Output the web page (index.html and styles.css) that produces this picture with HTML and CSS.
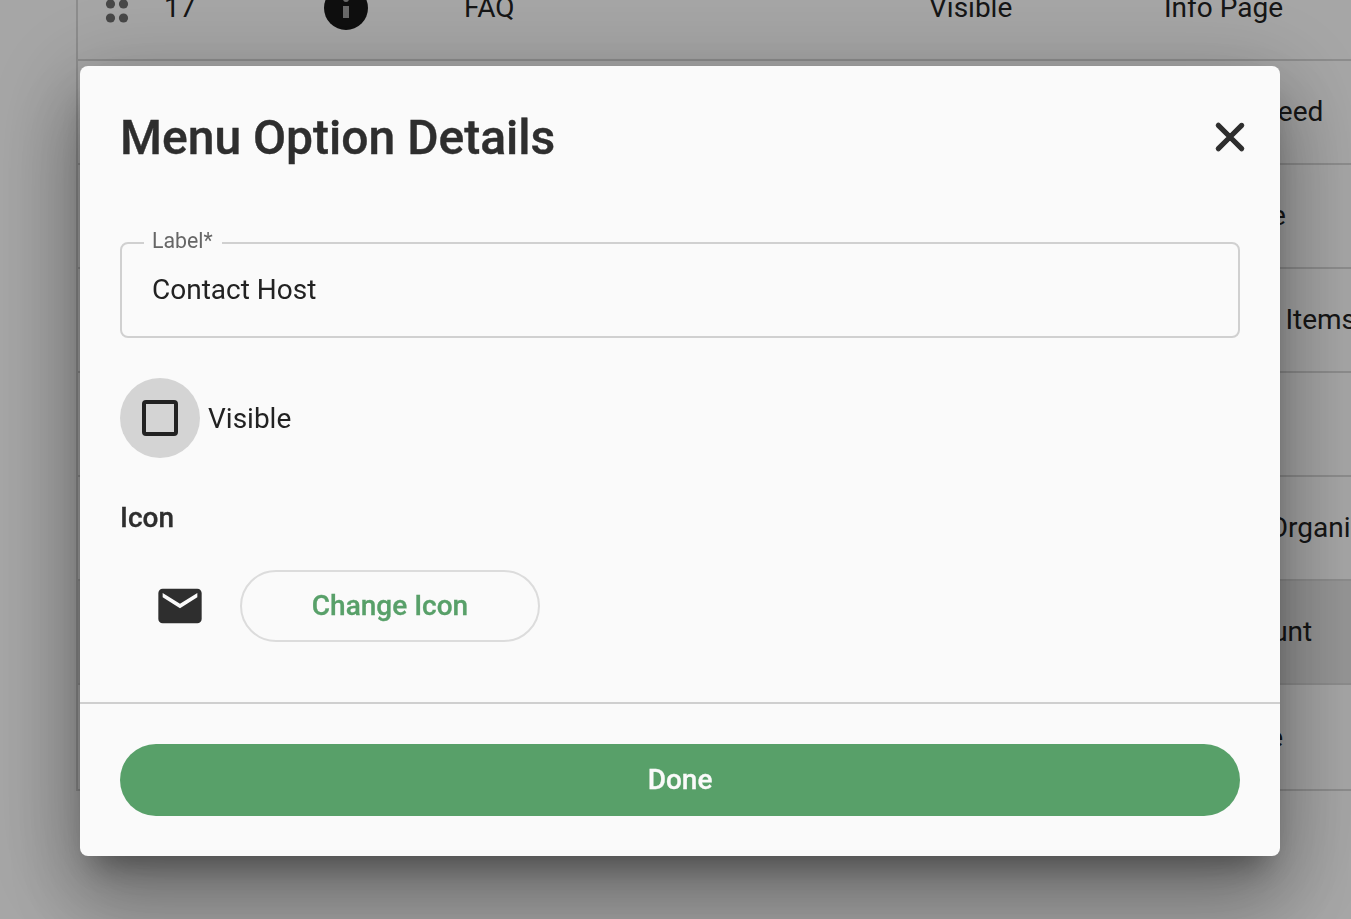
FILE: index.html
```html
<!DOCTYPE html>
<html>
<head>
    <meta charset="utf-8">
    <title>Menu Option Details</title>
    <link rel="stylesheet" href="styles.css">
</head>
<body>
    <div class="menu-table">
        <div class="menu-row">
            <svg class="drag-handle" viewBox="0 0 24 24" width="24" height="24"><circle cx="5.5" cy="5" r="4.6"/><circle cx="18.5" cy="5" r="4.6"/><circle cx="5.5" cy="19" r="4.6"/><circle cx="18.5" cy="19" r="4.6"/></svg>
            <span class="col-order">17</span>
            <span class="col-icon">
                <svg viewBox="0 0 44 44" width="44" height="44"><circle cx="22" cy="22" r="22" fill="#161616"/><rect x="19" y="20" width="6" height="12" fill="#a3a3a3"/><rect x="19" y="10" width="6" height="6" rx="3" fill="#a3a3a3"/></svg>
            </span>
            <span class="col-name">FAQ</span>
            <span class="col-status">Visible</span>
            <span class="col-type">Info Page</span>
        </div>
        <div class="menu-row"><span class="col-type">Activity Feed</span></div>
        <div class="menu-row"><span class="col-type">Link Page</span></div>
        <div class="menu-row"><span class="col-type">Schedule Items</span></div>
        <div class="menu-row"></div>
        <div class="menu-row"><span class="col-type">Contact Organizers</span></div>
        <div class="menu-row hovered"><span class="col-type">My Account</span></div>
        <div class="menu-row last"><span class="col-type">Info Page</span></div>
    </div>

    <div class="overlay"></div>

    <div class="dialog">
        <div class="dialog-body">
            <div class="dialog-header">
                <h2>Menu Option Details</h2>
                <svg class="close-icon" viewBox="0 0 24 24" width="50" height="50"><path d="M18.3 5.71a.996.996 0 0 0-1.41 0L12 10.59 7.11 5.7A.996.996 0 1 0 5.7 7.11L10.59 12 5.7 16.89a.996.996 0 1 0 1.41 1.41L12 13.41l4.89 4.89a.996.996 0 1 0 1.41-1.41L13.41 12l4.89-4.89c.38-.38.38-1.02 0-1.4z"/></svg>
            </div>

            <fieldset class="text-field">
                <legend>Label*</legend>
                <div class="field-value">Contact Host</div>
            </fieldset>

            <div class="checkbox-row">
                <span class="checkbox-ripple"><span class="checkbox-box"></span></span>
                <span>Visible</span>
            </div>

            <div class="icon-title">Icon</div>
            <div class="icon-row">
                <span class="icon-preview">
                    <svg viewBox="0 0 24 24" width="52" height="52"><path d="M20 4H4c-1.1 0-1.99.9-1.99 2L2 18c0 1.1.9 2 2 2h16c1.1 0 2-.9 2-2V6c0-1.1-.9-2-2-2zm0 4l-8 5-8-5V6l8 5 8-5v2z"/></svg>
                </span>
                <button type="button" class="change-icon">Change Icon</button>
            </div>
        </div>
        <div class="dialog-footer">
            <button type="button" class="done-button">Done</button>
        </div>
    </div>
</body>
</html>
```

FILE: styles.css
```css
html, body {
    height: 100%;
}

body {
    margin: 0;
    height: 919px;
    overflow: hidden;
    background-color: #fff;
    font-family: Roboto, "Noto Sans", sans-serif;
    color: #222;
}

/* table behind the dialog, scrolled so the first row is cut off */
.menu-table {
    margin: -43px 0 0 76px;
    border-left: 2px solid #d8d8d8;
    font-size: 28px;
}

.menu-row {
    position: relative;
    display: flex;
    align-items: center;
    height: 102px;
    border-bottom: 2px solid #d8d8d8;
    white-space: nowrap;
}

.menu-row.hovered {
    background-color: #e6e6e6;
}

.menu-row.last {
    height: 104px;
}

.menu-row span {
    position: absolute;
    top: 34px;
}

.menu-row.last span {
    top: 36px;
}

.drag-handle {
    position: absolute;
    left: 27px;
    top: 42px;
    fill: #6e6e6e;
}

.col-order {
    left: 86px;
}

.menu-row .col-icon {
    left: 246px;
    top: 29px;
}

.col-name {
    left: 386px;
}

.col-status {
    left: 851px;
}

.col-type {
    left: 1086px;
}

.overlay {
    position: fixed;
    top: 0;
    left: 0;
    right: 0;
    bottom: 0;
    background-color: rgba(0, 0, 0, 0.35);
}

.dialog {
    position: fixed;
    left: 80px;
    top: 66px;
    width: 1200px;
    height: 790px;
    display: flex;
    flex-direction: column;
    box-sizing: border-box;
    background-color: #fafafa;
    border-radius: 8px;
    box-shadow: 0 22px 30px -14px rgba(0, 0, 0, 0.36), 0 48px 76px 6px rgba(0, 0, 0, 0.22), 0 18px 92px 16px rgba(0, 0, 0, 0.18);
}

.dialog-body {
    flex: 1;
    padding: 41px 40px 0;
}

.dialog-header {
    display: flex;
    justify-content: space-between;
    align-items: center;
    height: 60px;
    margin: 0 -15px 0 0;
}

.dialog-header h2 {
    margin: 0;
    font-size: 48px;
    font-weight: 500;
    color: #2e2e2e;
    -webkit-text-stroke: 0.4px #2e2e2e;
}

.close-icon {
    fill: #2e2e2e;
    stroke: #2e2e2e;
    stroke-width: 0.5;
    stroke-linejoin: round;
}

.text-field {
    margin: 62px 0 0;
    padding: 0 30px;
    height: 109px;
    box-sizing: border-box;
    border: 2px solid #d0d0d0;
    border-radius: 8px;
}

.text-field legend {
    padding: 0 9px 4px 8px;
    margin-left: -8px;
    font-size: 21.3px;
    line-height: 24px;
    color: #666;
}

.field-value {
    margin-top: 16px;
    font-size: 28px;
    line-height: 34px;
    color: #222;
}

.checkbox-row {
    display: flex;
    align-items: center;
    gap: 8px;
    margin-top: 40px;
    font-size: 28px;
    color: #222;
}

.checkbox-ripple {
    display: flex;
    align-items: center;
    justify-content: center;
    width: 80px;
    height: 80px;
    border-radius: 50%;
    background-color: #d4d4d4;
}

.checkbox-box {
    width: 36px;
    height: 36px;
    box-sizing: border-box;
    border: 4px solid #222;
    border-radius: 4px;
}

.icon-title {
    margin-top: 43px;
    font-size: 28px;
    line-height: 34px;
    font-weight: 500;
    color: #2e2e2e;
    -webkit-text-stroke: 0.3px #2e2e2e;
}

.icon-row {
    display: flex;
    align-items: center;
    margin-top: 35px;
}

.icon-preview {
    display: flex;
    justify-content: center;
    width: 120px;
    fill: #2e2e2e;
}

.change-icon {
    width: 300px;
    height: 72px;
    padding: 0 0 2px;
    background: none;
    border: 2px solid #dcdcdc;
    border-radius: 36px;
    font-family: inherit;
    font-size: 28px;
    font-weight: 500;
    color: #58a069;
    -webkit-text-stroke: 0.3px #58a069;
}

.dialog-footer {
    padding: 40px;
    border-top: 2px solid #cfcfcf;
}

.done-button {
    display: block;
    width: 100%;
    height: 72px;
    padding: 0 0 2px;
    background-color: #58a069;
    border: none;
    border-radius: 36px;
    font-family: inherit;
    font-size: 28px;
    font-weight: 500;
    color: #fafafa;
    -webkit-text-stroke: 0.3px #fafafa;
}
```
